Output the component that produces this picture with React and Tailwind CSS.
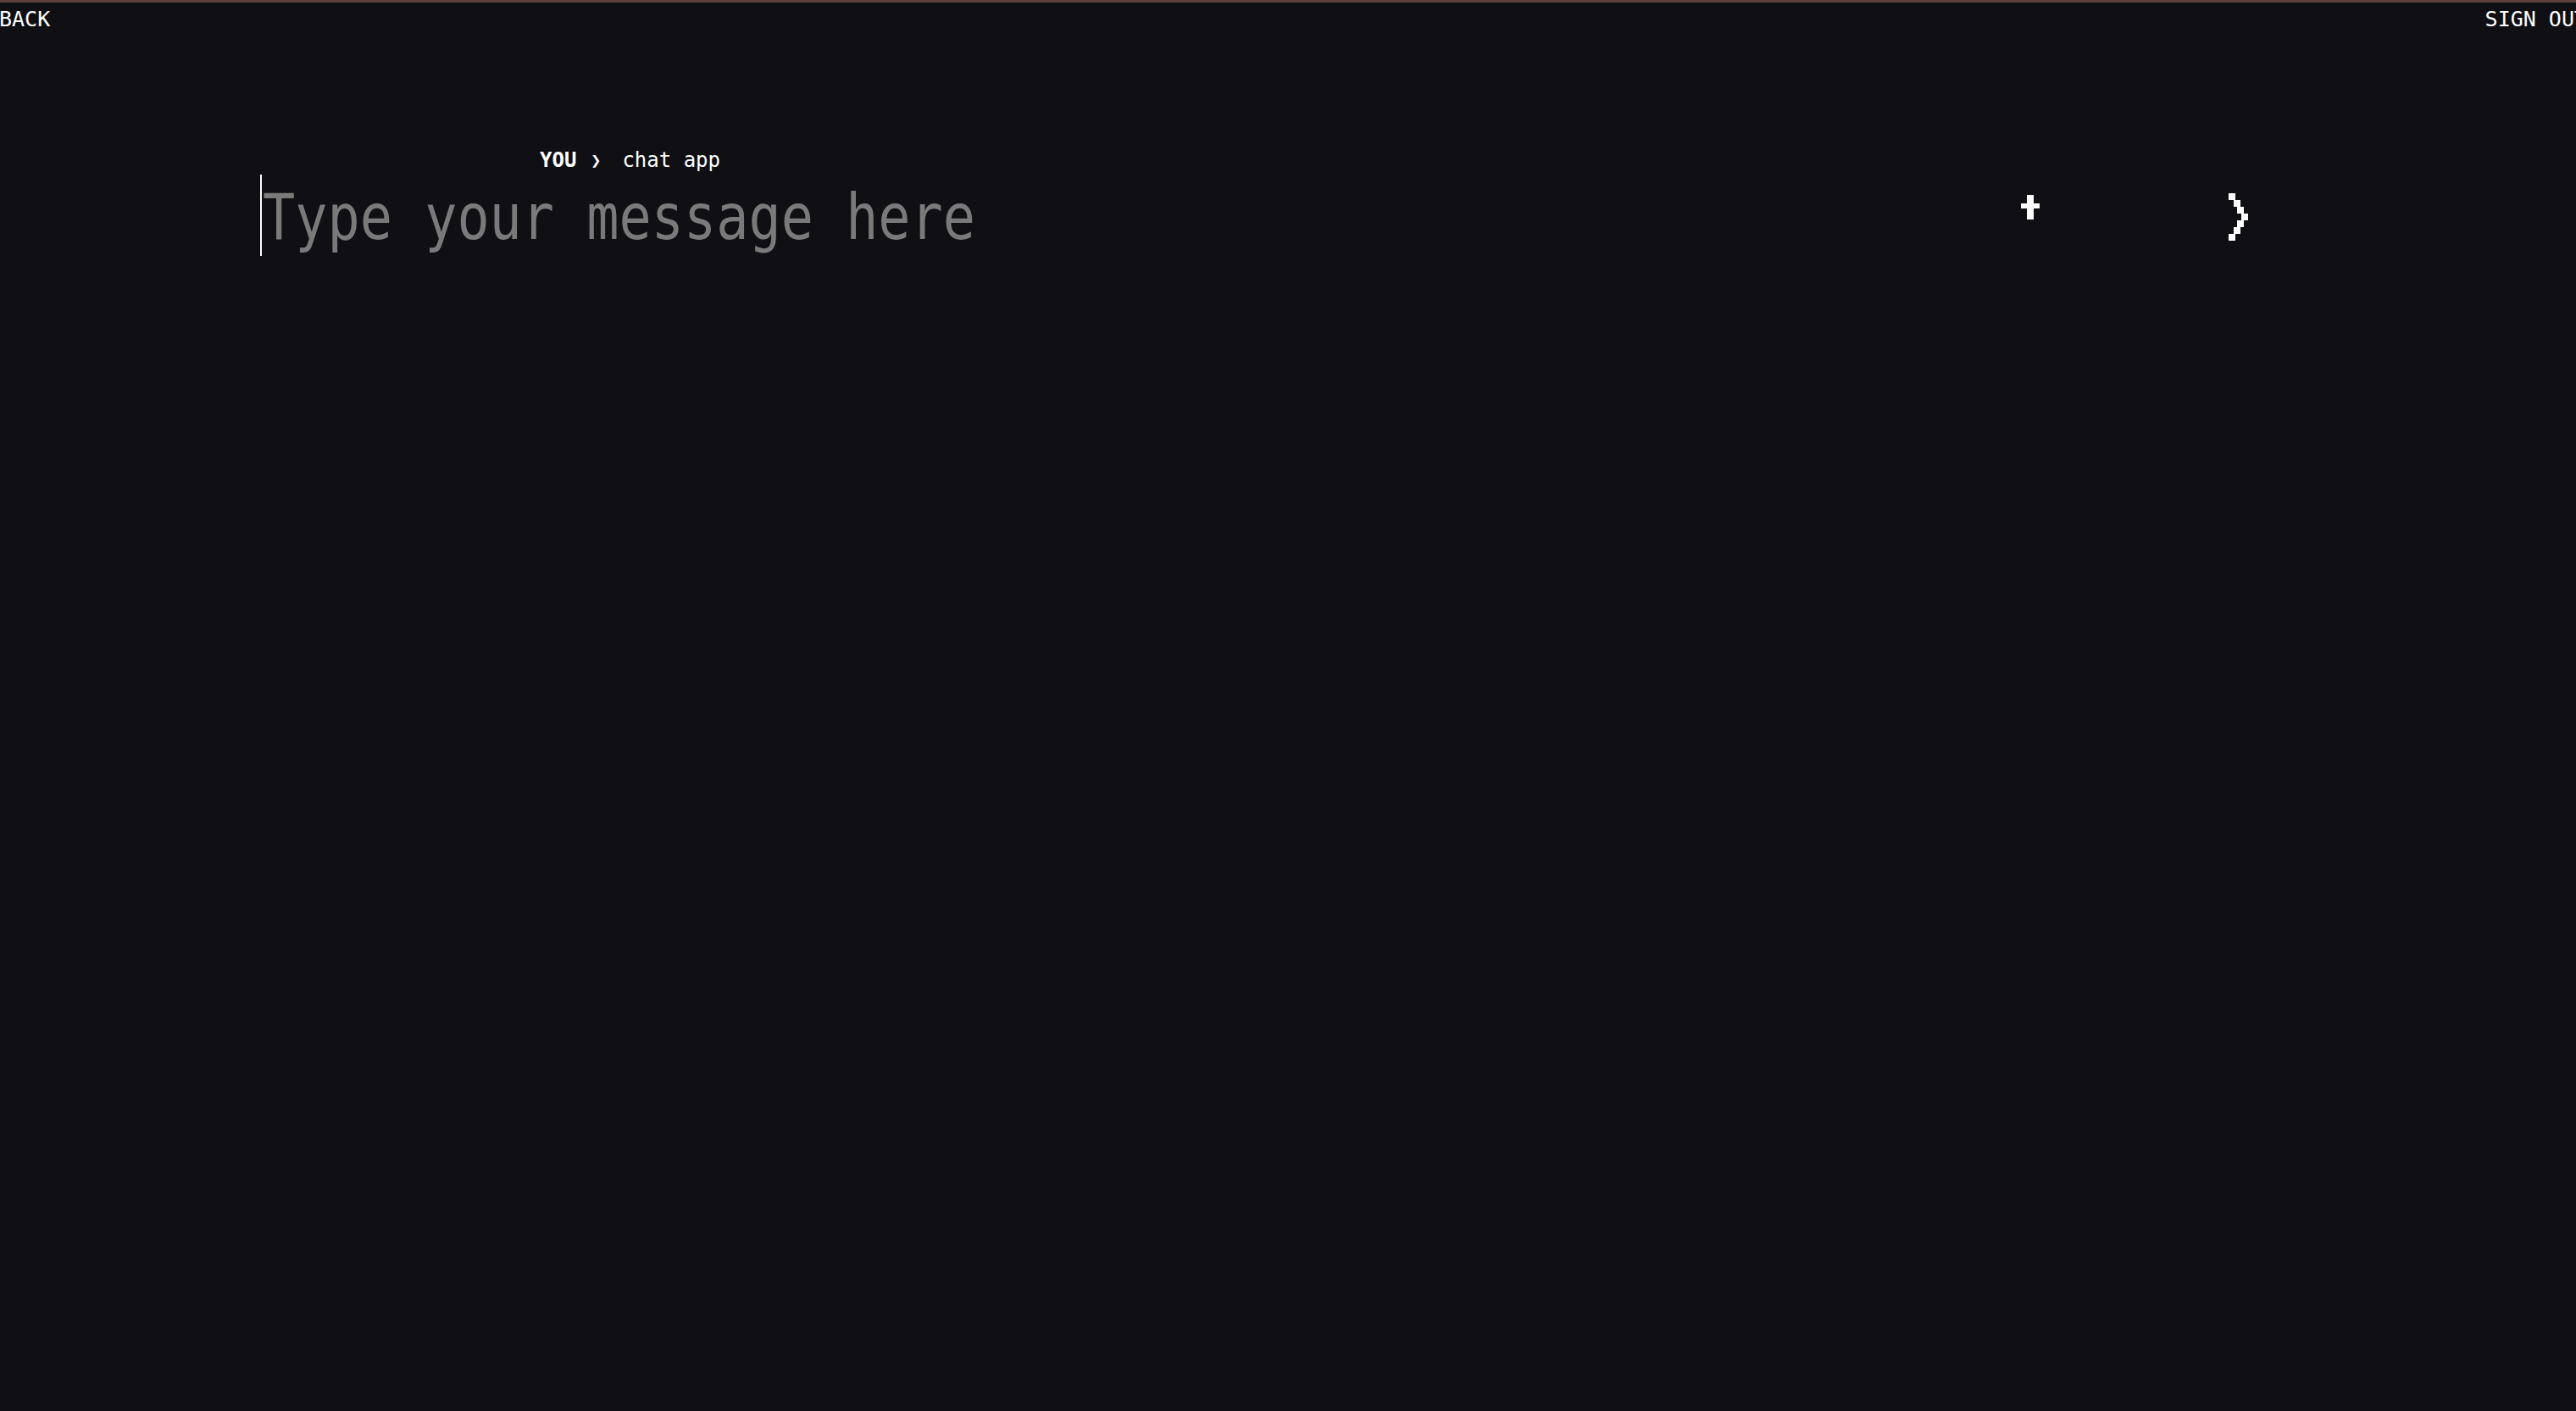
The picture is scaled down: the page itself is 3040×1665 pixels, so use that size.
import React from "react";

const mono = { fontFamily: '"DejaVu Sans Mono", "Liberation Mono", monospace' };

const PlusIcon = () => (
  <svg width="22" height="29" viewBox="0 0 22 29" className="shrink-0 mt-[24px]">
    <rect x="0" y="10" width="22" height="6" fill="#fff" />
    <rect x="7" y="0" width="8" height="29" fill="#fff" />
  </svg>
);

// pixel stair chevron
const SendIcon = () => {
  const steps = [0, 6, 10, 15, 10, 6, 0];
  return (
    <svg width="23" height="56" viewBox="0 0 23 56" className="shrink-0 mt-[22px] ml-[223px]">
      {steps.map((x, i) => (
        <rect key={i} x={x} y={i * 8} width="8" height="8" fill="#fff" />
      ))}
    </svg>
  );
};

const App = () => {
  return (
    <div className="min-h-screen w-full overflow-hidden bg-[#0f0f14] text-white" style={mono}>
      <div className="h-[3px] bg-[#5c403c]" />
      <div className="flex justify-between pt-[7px] text-[25px] leading-none">
        <a href="#" className="-ml-[1px]">BACK</a>
        <a href="#" className="-mr-[13px] whitespace-nowrap">SIGN OUT</a>
      </div>

      <div className="mt-[143px] ml-[637px] flex items-center h-[22px] text-[24px] leading-none whitespace-nowrap">
        <span className="font-bold">YOU</span>
        <span className="font-bold ml-[17px] text-[20px]">❯</span>
        <span className="ml-[25px]">chat app</span>
      </div>

      <div className="mt-[6px] ml-[307px] w-[2346px] flex items-start">
        <div className="flex-1 flex items-center h-[96px]">
          <div className="w-[2px] h-[96px] bg-white" />
          <span className="ml-[1px] mt-[5px] inline-block text-[63.5px] leading-none text-[#7a7a7a] scale-y-[1.17] whitespace-nowrap">
            Type your message here
          </span>
        </div>
        <PlusIcon />
        <SendIcon />
      </div>
    </div>
  );
};

export default App;
